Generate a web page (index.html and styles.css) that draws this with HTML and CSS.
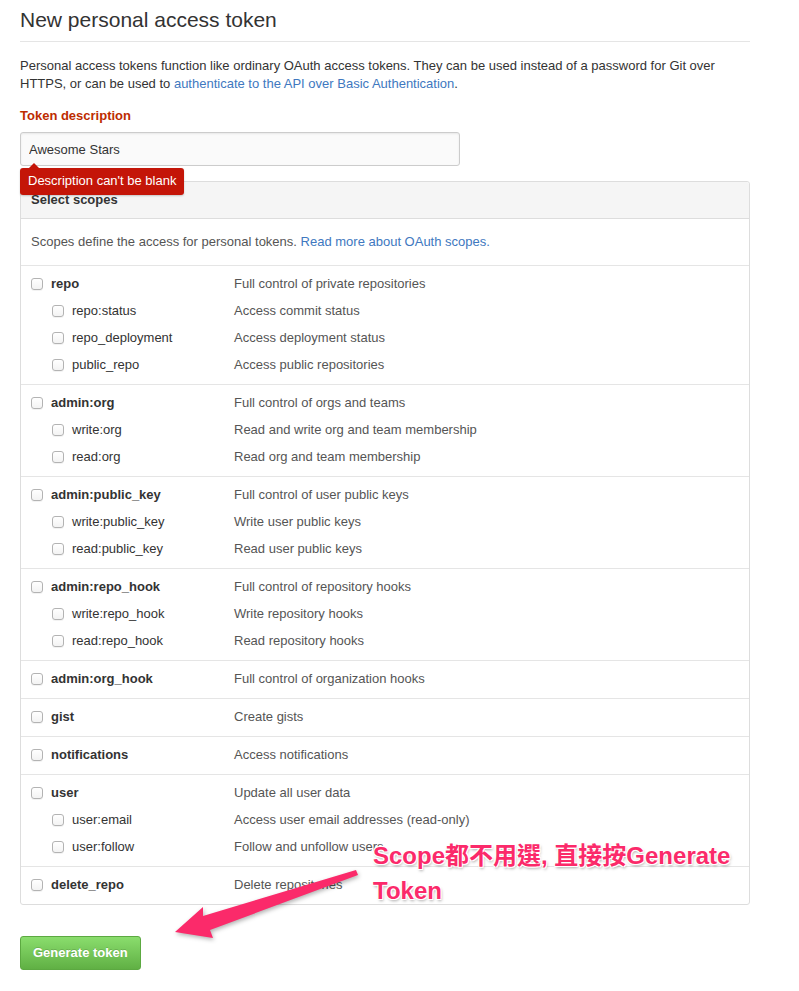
FILE: index.html
```html
<!DOCTYPE html>
<html>
<head>
<meta charset="utf-8">
<link rel="stylesheet" href="styles.css">
</head>
<body>
<div class="page">

<h1 class="subhead">New personal access token</h1>

<p class="lead">Personal access tokens function like ordinary OAuth access tokens. They can be used instead of a password for Git over HTTPS, or can be used to <a href="#">authenticate to the API over Basic Authentication</a>.</p>

<div class="form-group errored">
  <label class="label">Token description</label>
  <input class="input" type="text" value="Awesome Stars">
  <div class="error">Description can't be blank</div>
</div>

<div class="box">
  <div class="box-header">Select scopes</div>
  <div class="box-row box-note">Scopes define the access for personal tokens. <a href="#">Read more about OAuth scopes.</a></div>

  <div class="scope-group">
    <div class="scope"><span class="name main"><input type="checkbox">repo</span><span class="desc">Full control of private repositories</span></div>
    <div class="scope"><span class="name sub"><input type="checkbox">repo:status</span><span class="desc">Access commit status</span></div>
    <div class="scope"><span class="name sub"><input type="checkbox">repo_deployment</span><span class="desc">Access deployment status</span></div>
    <div class="scope"><span class="name sub"><input type="checkbox">public_repo</span><span class="desc">Access public repositories</span></div>
  </div>

  <div class="scope-group">
    <div class="scope"><span class="name main"><input type="checkbox">admin:org</span><span class="desc">Full control of orgs and teams</span></div>
    <div class="scope"><span class="name sub"><input type="checkbox">write:org</span><span class="desc">Read and write org and team membership</span></div>
    <div class="scope"><span class="name sub"><input type="checkbox">read:org</span><span class="desc">Read org and team membership</span></div>
  </div>

  <div class="scope-group">
    <div class="scope"><span class="name main"><input type="checkbox">admin:public_key</span><span class="desc">Full control of user public keys</span></div>
    <div class="scope"><span class="name sub"><input type="checkbox">write:public_key</span><span class="desc">Write user public keys</span></div>
    <div class="scope"><span class="name sub"><input type="checkbox">read:public_key</span><span class="desc">Read user public keys</span></div>
  </div>

  <div class="scope-group">
    <div class="scope"><span class="name main"><input type="checkbox">admin:repo_hook</span><span class="desc">Full control of repository hooks</span></div>
    <div class="scope"><span class="name sub"><input type="checkbox">write:repo_hook</span><span class="desc">Write repository hooks</span></div>
    <div class="scope"><span class="name sub"><input type="checkbox">read:repo_hook</span><span class="desc">Read repository hooks</span></div>
  </div>

  <div class="scope-group">
    <div class="scope"><span class="name main"><input type="checkbox">admin:org_hook</span><span class="desc">Full control of organization hooks</span></div>
  </div>

  <div class="scope-group">
    <div class="scope"><span class="name main"><input type="checkbox">gist</span><span class="desc">Create gists</span></div>
  </div>

  <div class="scope-group">
    <div class="scope"><span class="name main"><input type="checkbox">notifications</span><span class="desc">Access notifications</span></div>
  </div>

  <div class="scope-group">
    <div class="scope"><span class="name main"><input type="checkbox">user</span><span class="desc">Update all user data</span></div>
    <div class="scope"><span class="name sub"><input type="checkbox">user:email</span><span class="desc">Access user email addresses (read-only)</span></div>
    <div class="scope"><span class="name sub"><input type="checkbox">user:follow</span><span class="desc">Follow and unfollow users</span></div>
  </div>

  <div class="scope-group">
    <div class="scope"><span class="name main"><input type="checkbox">delete_repo</span><span class="desc">Delete repositories</span></div>
  </div>
</div>

<button class="btn-primary" type="button">Generate token</button>

<!-- note drawn on top of the form -->
<svg class="arrow" width="799" height="991" viewBox="0 0 799 991">
  <polygon points="175,932 203,907 203,916 356,870 358,875 210,930 213,938" fill="#fb2a6a"/>
</svg>
<div class="note">Scope都不用選, 直接按Generate<br>Token</div>

</div>
</body>
</html>
```

FILE: styles.css
```css
body {
  margin: 0;
  font-family: "Liberation Sans", Arial, sans-serif;
  font-size: 13px;
  line-height: 18px;
  color: #333;
  background: #fff;
}

a {
  color: #4078c0;
  text-decoration: none;
}

.page {
  position: relative;
  width: 730px;
  padding: 8px 20px 0;
  min-height: 983px;
}

.subhead {
  margin: 0;
  padding-bottom: 9px;
  font-size: 21px;
  line-height: 24px;
  font-weight: normal;
  border-bottom: 1px solid #e5e5e5;
}

.lead {
  margin: 15px 0 14px;
}

.form-group {
  position: relative;
  margin-bottom: 15px;
}

.label {
  display: block;
  font-weight: bold;
  color: #bd2c00;
  margin-bottom: 7px;
}

.input {
  display: block;
  box-sizing: border-box;
  width: 440px;
  height: 34px;
  margin: 0;
  padding: 7px 8px;
  font-family: inherit;
  font-size: 13px;
  line-height: 18px;
  color: #333;
  background: #fafafa;
  border: 1px solid #ccc;
  border-radius: 3px;
  box-shadow: inset 0 1px 2px rgba(0,0,0,0.075);
}

.error {
  position: absolute;
  left: 0;
  top: 61px;
  z-index: 2;
  padding: 4px 8px 5px;
  font-size: 13px;
  line-height: 18px;
  color: #fff;
  background: #c41508;
  border-radius: 3px;
  box-shadow: 0 1px 2px rgba(0,0,0,0.2);
}

.error:before {
  content: "";
  position: absolute;
  left: 9px;
  top: -5px;
  border-left: 5px solid transparent;
  border-right: 5px solid transparent;
  border-bottom: 5px solid #c41508;
}

.box {
  border: 1px solid #ddd;
  border-radius: 3px;
  margin-bottom: 31px;
}

.box-header {
  padding: 9px 10px;
  font-weight: bold;
  background: #f5f5f5;
  border-bottom: 1px solid #ddd;
  border-radius: 3px 3px 0 0;
}

.box-row {
  padding: 14px 10px;
  border-bottom: 1px solid #e5e5e5;
}

.box-note {
  color: #555;
}

.scope-group {
  padding: 4px 10px 6px;
  border-bottom: 1px solid #e5e5e5;
}

.scope-group:first-of-type {
  padding-bottom: 5px;
}

.scope-group:last-child {
  border-bottom: 0;
}

.scope {
  display: flex;
  align-items: center;
  height: 27px;
}

.name {
  display: flex;
  align-items: center;
  width: 203px;
  box-sizing: border-box;
}

.name.main {
  font-weight: bold;
}

.name.sub {
  padding-left: 21px;
}

.desc {
  color: #555;
}

.name input {
  -webkit-appearance: none;
  appearance: none;
  box-sizing: border-box;
  width: 12px;
  height: 12px;
  margin: 0 8px 0 0;
  border: 1px solid #b3b3b3;
  border-radius: 3px;
  background: linear-gradient(#fff, #f3f3f3);
  box-shadow: 0 1px 0 rgba(0,0,0,0.05);
}

.btn-primary {
  display: block;
  height: 34px;
  padding: 7px 12px;
  font-family: inherit;
  font-size: 13px;
  line-height: 18px;
  font-weight: bold;
  color: #fff;
  text-shadow: 0 -1px 0 rgba(0,0,0,0.15);
  background: linear-gradient(#8add6d, #60b044);
  border: 1px solid #5ca941;
  border-radius: 3px;
}

.arrow {
  position: absolute;
  left: 0;
  top: 0;
  pointer-events: none;
  filter: drop-shadow(1px 2px 2px rgba(0,0,0,0.3));
}

.note {
  position: absolute;
  left: 373px;
  top: 838px;
  font-family: "Liberation Sans", "Noto Sans CJK TC", sans-serif;
  font-size: 24px;
  line-height: 35px;
  font-weight: bold;
  color: #fb2a6a;
  text-shadow: -1px -1px 0 #fff, 1px -1px 0 #fff, -1px 1px 0 #fff, 1px 1px 0 #fff, 1px 2px 3px rgba(0,0,0,0.35);
}
```
